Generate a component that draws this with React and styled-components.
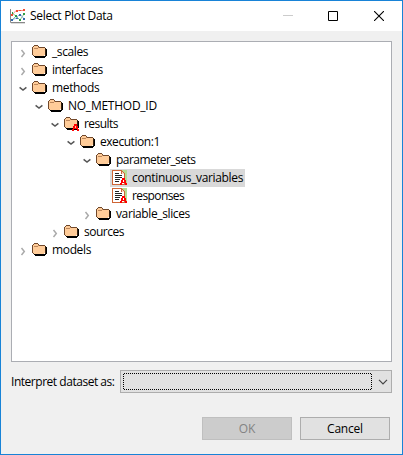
import React from "react";
import styled, { createGlobalStyle } from "styled-components";

const GlobalStyle = createGlobalStyle`
  * { box-sizing: border-box; }
  body { margin: 0; }
`;

const Dialog = styled.div`
  display: flex;
  flex-direction: column;
  width: 403px;
  height: 455px;
  border: 1px solid #1883d7;
  background: #f0f0f0;
  color: #000;
  font: 12px/18px "Open Sans", "Noto Sans", sans-serif;
`;

const TitleBar = styled.header`
  display: flex;
  align-items: center;
  height: 30px;
  padding-left: 8px;
  background: #fff;
`;

const Label = styled.span`
  white-space: nowrap;
  letter-spacing: ${(p) => p.$tracking || 0}px;
`;

const Title = styled(Label)`
  flex: 1;
  margin-left: 4px;
`;

const WindowButton = styled.button`
  display: grid;
  place-items: center;
  width: ${(p) => p.$width || 46}px;
  height: 30px;
  padding: 0;
  border: 0;
  background: transparent;
`;

const Drawing = styled.svg`
  display: block;
  flex: none;
`;

const Content = styled.main`
  display: flex;
  flex-direction: column;
  padding: 10px 10px 0;
`;

const Tree = styled.div`
  width: 381px;
  height: 321px;
  padding-top: 1px;
  border: 1px solid #abadb3;
  background: #fff;
`;

const Row = styled.div`
  display: flex;
  align-items: center;
  height: 18px;
  padding-left: ${(p) => 7 + p.$depth * 16}px;
`;

const Toggle = styled.span`
  display: block;
  width: 11px;
  height: 18px;
`;

const Item = styled.span`
  display: flex;
  height: 18px;
  padding: 0 2px;
  background: ${(p) => (p.$selected ? "#d9d9d9" : "transparent")};
`;

const ItemLabel = styled(Label)`
  margin-left: 4px;
`;

const Field = styled.div`
  display: flex;
  align-items: center;
  justify-content: space-between;
  width: 381px;
  margin-top: 8px;
`;

const Select = styled.div`
  display: flex;
  align-items: center;
  flex: none;
  width: 272px;
  height: 23px;
  padding: 2px 3px 2px 2px;
  border: 1px solid #adadad;
  background: #e1e1e1;
`;

const Focus = styled.span`
  width: 249px;
  height: 17px;
  margin-right: 6px;
`;

const Actions = styled.footer`
  display: flex;
  justify-content: flex-end;
  gap: 8px;
  width: 379px;
  margin-top: 24px;
`;

const Button = styled.button`
  width: 90px;
  height: 23px;
  padding: 0;
  border: 1px solid ${(p) => (p.disabled ? "#bfbfbf" : "#adadad")};
  background: ${(p) => (p.disabled ? "#cccccc" : "#e1e1e1")};
  color: ${(p) => (p.disabled ? "#838383" : "#000")};
  font: inherit;
  line-height: 21px;
  letter-spacing: -0.2px;
`;

function PlotIcon() {
  return (
    <Drawing width="17" height="17" viewBox="0 0 17 17">
      <path d="M1.5 1v13.5H16" fill="none" stroke="#888" />
      <path d="M2 15.5h14" stroke="#ddd" />
      <path d="M3 7 7 2.5h8" fill="none" stroke="#f59383" />
      <path d="m3 5 4 3 4 4 4-6M3 12l4-4" fill="none" stroke="#8cc68c" />
      <path d="m3 12 4-2 4-4 4 5" fill="none" stroke="#8fb2df" />
      <g shapeRendering="crispEdges">
        <path d="M2 6h2v2H2zM7 2h2v2H7zM10 2h2v1h-2zM14 1h2v2h-2z" fill="#f34b32" />
        <path d="M3 4h1v2H3zM6 7h2v2H6zM14 5h2v2h-2zM10 11h2v2h-2z" fill="#2e9d45" />
        <path d="M2 11h2v2H2zM7 10h2v1H7zM10 6h2v2h-2zM14 10h2v2h-2z" fill="#356bad" />
      </g>
    </Drawing>
  );
}

function Attribute() {
  return (
    <path
      d="M10 9h3v2h-3zM9 11h2v2H9zM12 11h2v2h-2zM9 13h5v1H9zM8 14h2v2H8zM13 14h2v2h-2z"
      fill="#f00"
    />
  );
}

function FolderIcon({ marked }) {
  return (
    <Drawing width="16" height="18" viewBox="0 0 16 18" shapeRendering="crispEdges">
      <path d="M13 5h1v1h1v7h-1v1h-1v1H3v-1H2v-1h11z" fill="#000" />
      <path d="M2 2h4v1H2zM1 3h1v1H1zM6 3h1v1H6zM7 4h6v1H7zM0 4h1v8H0zM1 12h1v1H1z" fill="#70482b" />
      <path d="M13 5h1v8h-1z" fill="#33200f" />
      <path d="M2 3h4v1h1v1h6v7h-1v1H2v-1H1V4h1z" fill="#ffcc99" />
      <path d="M2 5h4v1H2zM6 4h1v1H6z" fill="#bd875b" />
      {marked && <Attribute />}
    </Drawing>
  );
}

function DatasetIcon() {
  return (
    <Drawing width="16" height="18" viewBox="0 0 16 18" shapeRendering="crispEdges">
      <path d="M0 1h15v15H0z" fill="#b5dc93" />
      <path d="M0 1h10v1h1v1h1v1h1v12H0z" fill="#cf6535" />
      <path d="M1 2h8v3h3v10H1z" fill="#fff" />
      <path d="M10 3h1v1h1v1h-2z" fill="#f4d9c9" />
      <path d="M3 4h4v1H3zM3 6h7v1H3zM3 8h7v1H3zM3 10h5v1H3zM3 12h4v1H3z" fill="#222" />
      <Attribute />
    </Drawing>
  );
}

function Chevron({ open }) {
  return (
    <Drawing width="11" height="18" viewBox="0 0 11 18">
      <path
        d={open ? "M.6 8.4 4 11l3.4-2.6" : "m2.5 7 2.8 3.5L2.5 14"}
        fill="none"
        stroke={open ? "#555" : "#aaa"}
        strokeWidth="1.5"
      />
    </Drawing>
  );
}

const nodes = [
  { name: "_scales", depth: 0, tracking: -0.4 },
  { name: "interfaces", depth: 0, tracking: -0.45 },
  { name: "methods", depth: 0, tracking: -0.35, open: true },
  { name: "NO_METHOD_ID", depth: 1, tracking: -0.25, open: true },
  { name: "results", depth: 2, tracking: -0.55, open: true, marked: true },
  { name: "execution:1", depth: 3, tracking: -0.45, open: true },
  { name: "parameter_sets", depth: 4, tracking: -0.55, open: true },
  { name: "continuous_variables", depth: 5, tracking: -0.35, dataset: true, selected: true },
  { name: "responses", depth: 5, tracking: -0.6, dataset: true },
  { name: "variable_slices", depth: 4, tracking: -0.38 },
  { name: "sources", depth: 2, tracking: -0.5 },
  { name: "models", depth: 0, tracking: -0.35 },
];

export default function App() {
  return (
    <Dialog>
      <GlobalStyle />
      <TitleBar>
        <PlotIcon />
        <Title $tracking={-0.3}>Select Plot Data</Title>
        <WindowButton aria-label="Minimize" $width={44}>
          <Drawing width="10" height="10"><path d="M0 4.5h10" stroke="#ccc" /></Drawing>
        </WindowButton>
        <WindowButton aria-label="Maximize">
          <Drawing width="10" height="10"><path d="M.5.5h9v9h-9z" fill="none" stroke="#000" /></Drawing>
        </WindowButton>
        <WindowButton aria-label="Close">
          <Drawing width="10" height="10"><path d="m0 0 10 10M10 0 0 10" stroke="#000" strokeWidth="1.1" /></Drawing>
        </WindowButton>
      </TitleBar>
      <Content>
        <Tree>
          {nodes.map((n) => (
            <Row key={n.name} $depth={n.depth}>
              <Toggle>{!n.dataset && <Chevron open={n.open} />}</Toggle>
              <Item $selected={n.selected}>
                {n.dataset ? <DatasetIcon /> : <FolderIcon marked={n.marked} />}
                <ItemLabel $tracking={n.tracking}>{n.name}</ItemLabel>
              </Item>
            </Row>
          ))}
        </Tree>
        <Field>
          <Label $tracking={-0.47}>Interpret dataset as:</Label>
          <Select>
            <Focus>
              <Drawing width="249" height="17" shapeRendering="crispEdges">
                <path
                  d="M1 .5h247M1 16.5h247M.5 1v15M248.5 1v15"
                  stroke="#000"
                  strokeDasharray="1 1"
                />
              </Drawing>
            </Focus>
            <Drawing width="10" height="6"><path d="m1 .8 4 4 4-4" fill="none" stroke="#444" strokeWidth="1.2" /></Drawing>
          </Select>
        </Field>
        <Actions>
          <Button disabled>OK</Button>
          <Button>Cancel</Button>
        </Actions>
      </Content>
    </Dialog>
  );
}
